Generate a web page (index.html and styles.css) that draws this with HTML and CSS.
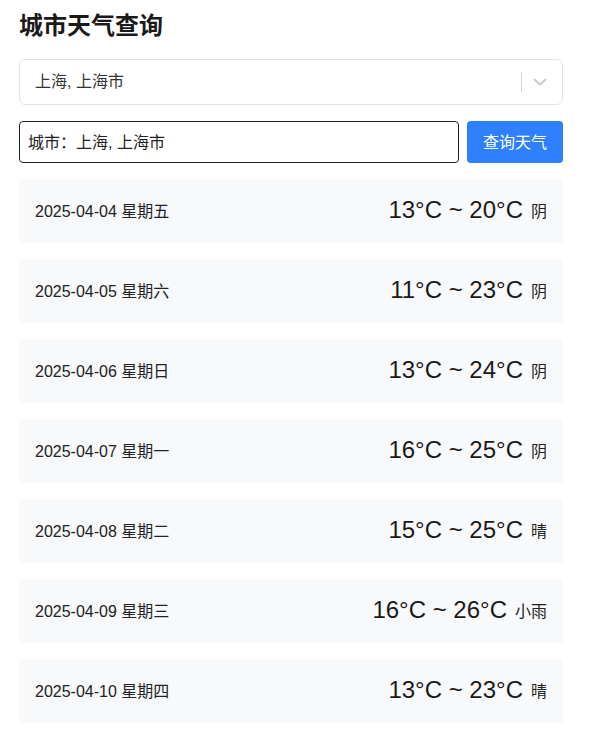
FILE: index.html
```html
<!DOCTYPE html>
<html lang="zh-CN">
<head>
<meta charset="utf-8">
<title>城市天气查询</title>
<link rel="stylesheet" href="styles.css">
</head>
<body>
<div class="page">
  <h1 class="title">城市天气查询</h1>
  <div class="select">
    <span class="select-value">上海, 上海市</span>
    <span class="select-sep"></span>
    <svg class="select-arrow" width="14" height="8" viewBox="0 0 14 8"><path d="M1.5 1.5 L7 6.5 L12.5 1.5" fill="none" stroke="#c8c8c8" stroke-width="1.8" stroke-linecap="round" stroke-linejoin="round"/></svg>
  </div>
  <div class="query">
    <input class="query-input" type="text" value="城市：上海, 上海市">
    <button class="query-btn">查询天气</button>
  </div>
  <ul class="list">
    <li class="day"><span class="date">2025-04-04 星期五</span><span class="right"><span class="temp">13°C ~ 20°C</span><span class="cond">阴</span></span></li>
    <li class="day"><span class="date">2025-04-05 星期六</span><span class="right"><span class="temp">11°C ~ 23°C</span><span class="cond">阴</span></span></li>
    <li class="day"><span class="date">2025-04-06 星期日</span><span class="right"><span class="temp">13°C ~ 24°C</span><span class="cond">阴</span></span></li>
    <li class="day"><span class="date">2025-04-07 星期一</span><span class="right"><span class="temp">16°C ~ 25°C</span><span class="cond">阴</span></span></li>
    <li class="day"><span class="date">2025-04-08 星期二</span><span class="right"><span class="temp">15°C ~ 25°C</span><span class="cond">晴</span></span></li>
    <li class="day"><span class="date">2025-04-09 星期三</span><span class="right"><span class="temp">16°C ~ 26°C</span><span class="cond">小雨</span></span></li>
    <li class="day"><span class="date">2025-04-10 星期四</span><span class="right"><span class="temp">13°C ~ 23°C</span><span class="cond">晴</span></span></li>
  </ul>
</div>
</body>
</html>
```

FILE: styles.css
```css
* { box-sizing: border-box; }
html, body { margin: 0; padding: 0; background: #fff; }
body {
  font-family: "Liberation Sans", "Noto Sans CJK SC", sans-serif;
  color: #222;
}
.page {
  width: 544px;
  margin-left: 19px;
  padding-top: 10px;
}
.title {
  margin: 0 0 17px;
  font-size: 24px;
  line-height: 32px;
  font-weight: 700;
  color: #1a1a1a;
}
.select {
  height: 46px;
  border: 1px solid #e3e3e3;
  border-radius: 6px;
  display: flex;
  align-items: center;
  padding: 0 15px 0 15px;
}
.select-value {
  flex: 1;
  font-size: 16px;
  color: #333;
  margin-bottom: 4px;
}
.select-sep {
  width: 1px;
  height: 20px;
  background: #d6d6d6;
  margin-right: 11px;
}
.select-arrow { display: block; }
.query {
  margin-top: 16px;
  display: flex;
  gap: 8px;
}
.query-input {
  flex: 1;
  height: 42px;
  border: 1px solid #222;
  border-radius: 4px;
  padding: 0 8px 3px;
  font-family: inherit;
  font-size: 16px;
  color: #222;
  outline: none;
}
.query-btn {
  width: 96px;
  height: 42px;
  border: none;
  border-radius: 4px;
  background: #2e80ff;
  color: #fff;
  font-family: inherit;
  font-size: 16px;
  padding: 0 0 3px;
}
.list {
  list-style: none;
  margin: 16px 0 0;
  padding: 0;
  display: flex;
  flex-direction: column;
  gap: 16px;
}
.day {
  height: 64px;
  background: #f8f9fb;
  border-radius: 4px;
  display: flex;
  align-items: center;
  justify-content: space-between;
  padding: 0 16px 3px;
}
.date { font-size: 16px; color: #222; }
.right { display: flex; align-items: center; gap: 8px; }
.temp { font-size: 24px; color: #1a1a1a; }
.cond { font-size: 16px; color: #222; }
```
